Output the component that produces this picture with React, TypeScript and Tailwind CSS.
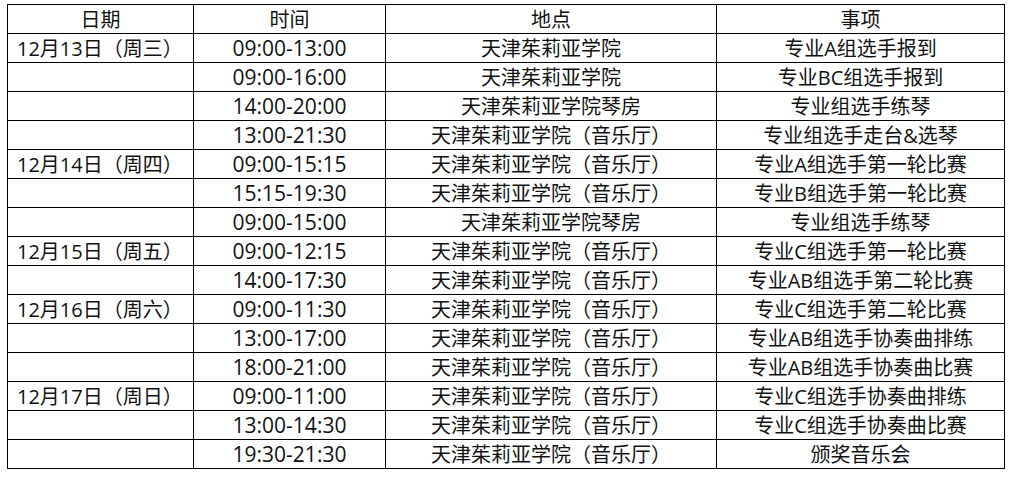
const rows: [string, string, string, string][] = [
  ['12月13日（周三）', '09:00-13:00', '天津茱莉亚学院', '专业A组选手报到'],
  ['', '09:00-16:00', '天津茱莉亚学院', '专业BC组选手报到'],
  ['', '14:00-20:00', '天津茱莉亚学院琴房', '专业组选手练琴'],
  ['', '13:00-21:30', '天津茱莉亚学院（音乐厅）', '专业组选手走台&选琴'],
  ['12月14日（周四）', '09:00-15:15', '天津茱莉亚学院（音乐厅）', '专业A组选手第一轮比赛'],
  ['', '15:15-19:30', '天津茱莉亚学院（音乐厅）', '专业B组选手第一轮比赛'],
  ['', '09:00-15:00', '天津茱莉亚学院琴房', '专业组选手练琴'],
  ['12月15日（周五）', '09:00-12:15', '天津茱莉亚学院（音乐厅）', '专业C组选手第一轮比赛'],
  ['', '14:00-17:30', '天津茱莉亚学院（音乐厅）', '专业AB组选手第二轮比赛'],
  ['12月16日（周六）', '09:00-11:30', '天津茱莉亚学院（音乐厅）', '专业C组选手第二轮比赛'],
  ['', '13:00-17:00', '天津茱莉亚学院（音乐厅）', '专业AB组选手协奏曲排练'],
  ['', '18:00-21:00', '天津茱莉亚学院（音乐厅）', '专业AB组选手协奏曲比赛'],
  ['12月17日（周日）', '09:00-11:00', '天津茱莉亚学院（音乐厅）', '专业C组选手协奏曲排练'],
  ['', '13:00-14:30', '天津茱莉亚学院（音乐厅）', '专业C组选手协奏曲比赛'],
  ['', '19:30-21:30', '天津茱莉亚学院（音乐厅）', '颁奖音乐会'],
]

export default function App() {
  return (
    <div className="bg-white pt-[4px] pl-[7px] w-[1012px] h-[477px] text-[#111] font-['Open_Sans','Noto_Sans_CJK_SC',sans-serif] text-[20px]">
      <table className="border-collapse table-fixed">
        <colgroup>
          <col className="w-[186px]" />
          <col className="w-[192px]" />
          <col className="w-[331px]" />
          <col className="w-[288px]" />
        </colgroup>
        <thead>
          <tr className="h-[29px]">
            <th className="border border-black font-normal leading-[27px] p-0">日期</th>
            <th className="border border-black font-normal leading-[27px] p-0">时间</th>
            <th className="border border-black font-normal leading-[27px] p-0">地点</th>
            <th className="border border-black font-normal leading-[27px] p-0">事项</th>
          </tr>
        </thead>
        <tbody>
          {rows.map((r, i) => (
            <tr key={i} className="h-[29px]">
              <td className="border border-black leading-[27px] p-0 pl-[9px] whitespace-nowrap">{r[0]}</td>
              <td className="border border-black leading-[27px] p-0 text-center text-[21px]">{r[1]}</td>
              <td className="border border-black leading-[27px] p-0 text-center whitespace-nowrap">{r[2]}</td>
              <td className="border border-black leading-[27px] p-0 text-center whitespace-nowrap">{r[3]}</td>
            </tr>
          ))}
        </tbody>
      </table>
    </div>
  )
}
